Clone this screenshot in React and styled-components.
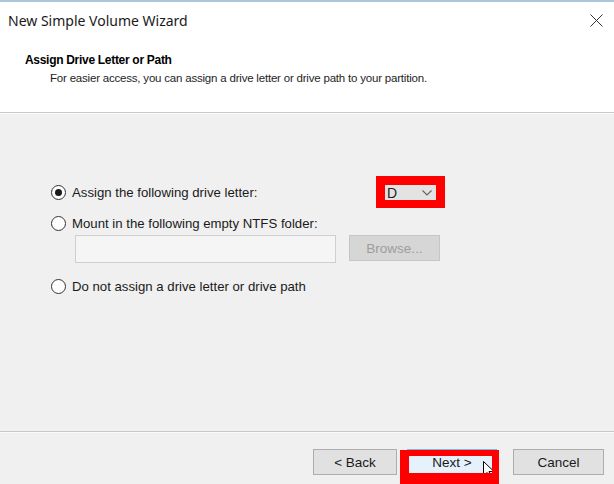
import React from 'react';
import styled, { createGlobalStyle } from 'styled-components';

const GlobalStyle = createGlobalStyle`
  html, body {
    margin: 0;
    padding: 0;
    background: #ffffff;
  }
  body {
    font-family: "Liberation Sans", Arial, sans-serif;
    color: #000;
  }
`;

const Window = styled.div`
  width: 614px;
  height: 484px;
  display: flex;
  flex-direction: column;
  overflow: hidden;
  background: #ffffff;
`;

const TopStripe = styled.div`
  height: 2px;
  background: #a9c6dc;
`;

const TitleBar = styled.div`
  height: 36px;
  display: flex;
  align-items: center;
  justify-content: space-between;
  padding: 0 11px 0 8px;
`;

const Title = styled.span`
  font-family: "Noto Sans", "Open Sans", sans-serif;
  font-size: 14px;
  color: #1a1a1a;
`;

const Header = styled.div`
  height: 74px;
  padding: 14px 0 0 25px;
  box-sizing: border-box;
`;

const HeaderTitle = styled.div`
  font-size: 12px;
  font-weight: bold;
  letter-spacing: -0.3px;
  color: #000;
  line-height: 16px;
`;

const HeaderText = styled.div`
  font-size: 11.5px;
  letter-spacing: -0.2px;
  color: #1e1e1e;
  line-height: 16px;
  padding-left: 25px;
  margin-top: 2px;
`;

const Separator = styled.div`
  height: 1px;
  background: #c9c9c9;
  border-bottom: 1px solid #fbfbfb;
`;

const Content = styled.div`
  flex: 1;
  background: #f0f0f0;
  padding: 62px 0 0 51px;
  box-sizing: border-box;
`;

const Row = styled.div`
  display: grid;
  grid-template-columns: ${(p) => (p.$wide ? '325px auto' : 'auto')};
  align-items: center;
  height: ${(p) => p.$h || 20}px;
  margin-top: ${(p) => p.$mt || 0}px;
`;

const Option = styled.label`
  display: flex;
  align-items: center;
  gap: 6px;
  font-size: 13.2px;
  color: #1a1a1a;
`;

const Radio = styled.span`
  width: 13px;
  height: 13px;
  border: 1px solid #333;
  border-radius: 50%;
  background: #fff;
  display: flex;
  align-items: center;
  justify-content: center;
  flex-shrink: 0;

  &::after {
    content: '';
    width: 7px;
    height: 7px;
    border-radius: 50%;
    background: ${(p) => (p.$checked ? '#1a1a1a' : 'transparent')};
  }
`;

const RedFrame = styled.div`
  border: 9px solid #ff0000;
  border-bottom-width: 8px;
  width: 51px;
  height: 15px;
`;

const Combo = styled.div`
  height: 100%;
  background: #e3e3e3;
  display: flex;
  align-items: center;
  justify-content: space-between;
  padding: 0 4px 0 2px;
  font-size: 14px;
  color: #222;
`;

const FolderRow = styled.div`
  display: flex;
  gap: 13px;
  padding-left: 24px;
  margin-top: 2px;
  align-items: flex-start;
`;

const TextBox = styled.div`
  width: 259px;
  height: 26px;
  border: 1px solid #cfcfcf;
  background: #f5f5f5;
`;

const Button = styled.div`
  width: ${(p) => p.$w || 84}px;
  height: 24px;
  border: 1px solid ${(p) => (p.$disabled ? '#c6c6c6' : '#adadad')};
  background: ${(p) => (p.$disabled ? '#d6d6d6' : '#e1e1e1')};
  color: ${(p) => (p.$disabled ? '#9d9d9d' : '#1a1a1a')};
  display: flex;
  align-items: center;
  justify-content: center;
  font-size: 13.5px;
  flex-shrink: 0;
`;

const Footer = styled.div`
  height: 51px;
  background: #f0f0f0;
  display: flex;
  align-items: flex-start;
  justify-content: flex-end;
  padding: 16px 10px 0 0;
  box-sizing: border-box;
`;

const NextSlot = styled.div`
  position: relative;
  margin: 0 16px 0 10px;
`;

const NextButton = styled(Button)`
  border-color: #7eb4ea;
  background: #e5f1fb;
`;

const Highlight = styled.div`
  position: absolute;
  left: -7px;
  top: 1px;
  width: 83px;
  height: 17px;
  border: solid #ff0000;
  border-width: 6px 7px 12px 9px;
  z-index: 2;
`;

const Cursor = styled.svg`
  position: absolute;
  left: 76px;
  top: 12px;
  z-index: 1;
`;

export default function App() {
  return (
    <>
      <GlobalStyle />
      <Window>
        <TopStripe />
        <TitleBar>
          <Title>New Simple Volume Wizard</Title>
          <svg width="13" height="13" viewBox="0 0 13 13">
            <path d="M0.5 0.5 L12.5 12.5 M12.5 0.5 L0.5 12.5" stroke="#333" strokeWidth="1" />
          </svg>
        </TitleBar>
        <Header>
          <HeaderTitle>Assign Drive Letter or Path</HeaderTitle>
          <HeaderText>
            For easier access, you can assign a drive letter or drive path to your partition.
          </HeaderText>
        </Header>
        <Separator />
        <Content>
          <Row $wide $h={32}>
            <Option>
              <Radio $checked />
              Assign the following drive letter:
            </Option>
            <RedFrame>
              <Combo>
                <span>D</span>
                <svg width="10" height="6" viewBox="0 0 10 6">
                  <path d="M0.5 0.5 L5 5 L9.5 0.5" fill="none" stroke="#666" strokeWidth="1.2" />
                </svg>
              </Combo>
            </RedFrame>
          </Row>
          <Row $mt={5}>
            <Option>
              <Radio />
              Mount in the following empty NTFS folder:
            </Option>
          </Row>
          <FolderRow>
            <TextBox />
            <Button $disabled $w={89}>Browse...</Button>
          </FolderRow>
          <Row $mt={13}>
            <Option>
              <Radio />
              Do not assign a drive letter or drive path
            </Option>
          </Row>
        </Content>
        <Separator />
        <Footer>
          <Button $w={82}>&lt; Back</Button>
          <NextSlot>
            <NextButton $w={88}>Next &gt;</NextButton>
            <Cursor width="12" height="19" viewBox="0 0 12 19">
              <path
                d="M0.5 0.5 L0.5 15 L4 11.5 L6.5 17.5 L8.5 16.5 L6 10.5 L11 10.5 Z"
                fill="#fff"
                stroke="#000"
                strokeWidth="1"
              />
            </Cursor>
            <Highlight />
          </NextSlot>
          <Button $w={89}>Cancel</Button>
        </Footer>
      </Window>
    </>
  );
}
